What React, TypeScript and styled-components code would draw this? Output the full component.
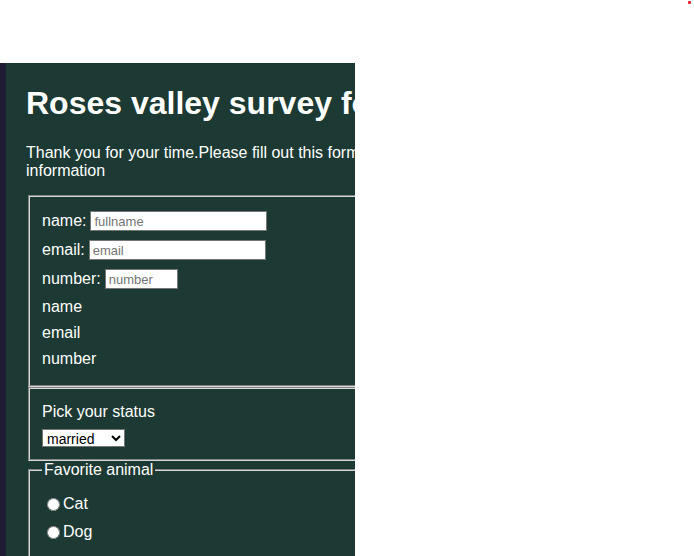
import React from "react";
import styled, { createGlobalStyle } from "styled-components";

const Global = createGlobalStyle`
  html, body { margin: 0; padding: 0; background: #ffffff; }
  body { font-family: "Liberation Sans", Arial, sans-serif; overflow: hidden; }
`;

const TopBar = styled.div`
  height: 63px;
  display: flex;
  justify-content: flex-end;
  align-items: flex-start;
  padding: 1px 3px 0 0;
  box-sizing: border-box;
`;

const Dot = styled.span`
  width: 3px;
  height: 3px;
  border-radius: 1px;
  background: #e8202a;
  display: block;
`;

const Panel = styled.main`
  width: 355px;
  box-sizing: border-box;
  border-left: 6px solid #1e1d35;
  background: #1c3a33;
  overflow: hidden;
  height: 520px;
  color: #ffffff;
`;

const Inner = styled.div`
  width: 460px;
  padding: 22px 0 0 20px;
  box-sizing: border-box;
`;

const Title = styled.h1`
  margin: 0;
  font-size: 32px;
  font-weight: bold;
  line-height: 37px;
  white-space: nowrap;
`;

const Intro = styled.p`
  margin: 22px 0 15px;
  font-size: 16px;
  line-height: 18px;
  width: 430px;
`;

const Fieldset = styled.fieldset<{ $pad: string }>`
  margin: 0 2px;
  padding: ${(p) => p.$pad};
  border: 2px groove #d8d8d8;
  display: flex;
  flex-direction: column;
  min-width: 0;
`;

const InputRow = styled.label`
  display: flex;
  align-items: center;
  height: 20px;
  margin-bottom: 9px;
  font-size: 16px;
  gap: 4px;
`;

const TextInput = styled.input<{ $w: number }>`
  width: ${(p) => p.$w}px;
  height: 20px;
  box-sizing: border-box;
  border: 1px solid #767676;
  padding: 1px 3px;
  font-family: "Liberation Sans", Arial, sans-serif;
  font-size: 13px;
  background: #fff;
  color: #000;
  &::placeholder { color: #757575; }
`;

const TextLine = styled.div`
  font-size: 16px;
  line-height: 18px;
  & + & { margin-top: 8px; }
`;

const Caption = styled.div`
  font-size: 16px;
  line-height: 18px;
  margin-bottom: 8px;
`;

const Select = styled.select`
  width: 83px;
  height: 18px;
  font-family: "Liberation Sans", Arial, sans-serif;
  font-size: 14px;
  padding: 0;
  border: 1px solid #767676;
  background: #fff;
  color: #000;
  border-radius: 0;
`;

const Legend = styled.legend`
  padding: 0 2px;
  font-size: 16px;
  line-height: 18px;
`;

const RadioRow = styled.label`
  display: flex;
  align-items: center;
  font-size: 16px;
  line-height: 18px;
  height: 18px;
  & + & { margin-top: 10px; }
  input { margin: 0 3px 0 5px; width: 13px; height: 13px; }
`;

export default function App() {
  return (
    <>
      <Global />
      <TopBar>
        <Dot />
      </TopBar>
      <Panel>
        <Inner>
          <Title>Roses valley survey form</Title>
          <Intro>
            Thank you for your time.Please fill out this form with your
            information
          </Intro>
          <form>
            <Fieldset $pad="14px 12px 17px">
              <InputRow>
                name: <TextInput $w={177} placeholder="fullname" />
              </InputRow>
              <InputRow>
                email: <TextInput $w={177} placeholder="email" />
              </InputRow>
              <InputRow>
                number: <TextInput $w={73} placeholder="number" />
              </InputRow>
              <TextLine>name</TextLine>
              <TextLine>email</TextLine>
              <TextLine>number</TextLine>
            </Fieldset>
            <Fieldset $pad="14px 12px 11px">
              <Caption>Pick your status</Caption>
              <div>
                <Select defaultValue="married">
                  <option value="married">married</option>
                  <option value="single">single</option>
                </Select>
              </div>
            </Fieldset>
            <Fieldset $pad="16px 12px 20px">
              <Legend>Favorite animal</Legend>
              <RadioRow>
                <input type="radio" name="animal" />
                Cat
              </RadioRow>
              <RadioRow>
                <input type="radio" name="animal" />
                Dog
              </RadioRow>
            </Fieldset>
          </form>
        </Inner>
      </Panel>
    </>
  );
}
